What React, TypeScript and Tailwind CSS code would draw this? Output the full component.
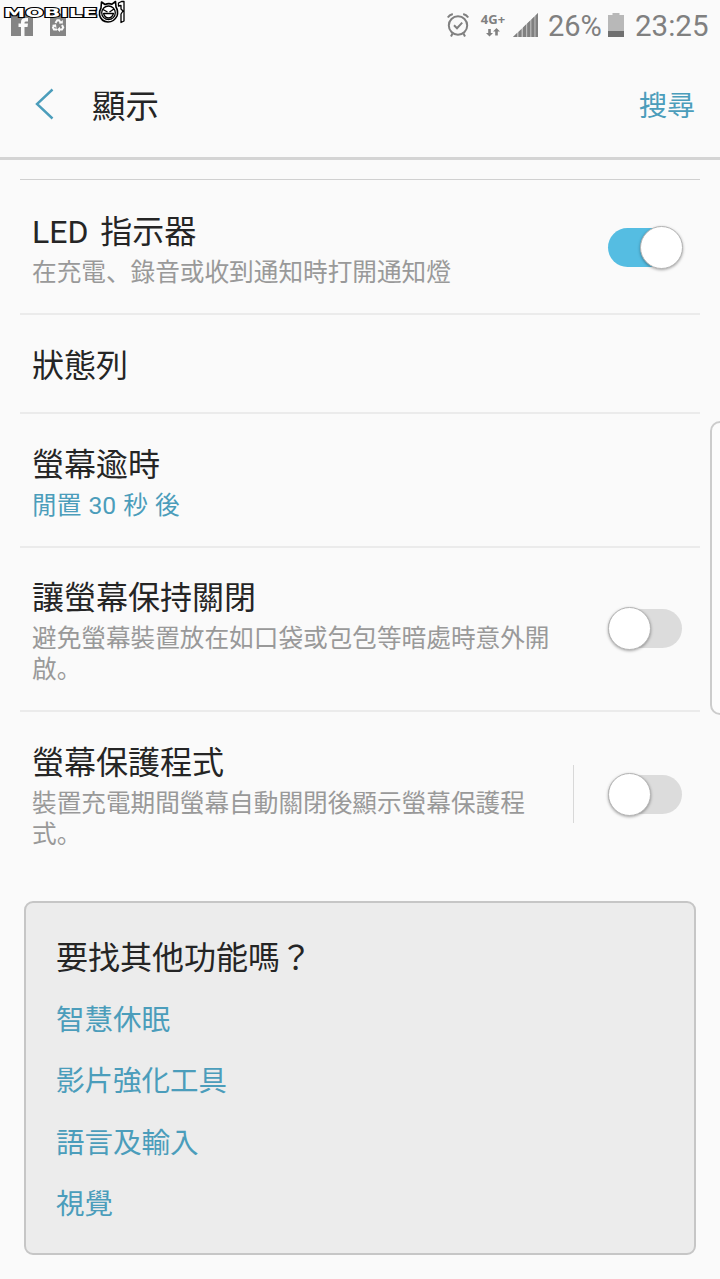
import React from "react";

const rows = [
  {
    title: "LED 指示器",
    lines: ["在充電、錄音或收到通知時打開通知燈"],
    box: "h-[135px] pt-[29px]",
    toggle: "on",
  },
  { title: "狀態列", lines: [], box: "h-[99px] pt-[28px]" },
  {
    title: "螢幕逾時",
    lines: ["閒置 30 秒 後"],
    box: "h-[134px] pt-[28px]",
    accent: true,
  },
  {
    title: "讓螢幕保持關閉",
    lines: ["避免螢幕裝置放在如口袋或包包等暗處時意外開", "啟。"],
    box: "h-[164px] pt-[27px]",
    toggle: "off",
  },
  {
    title: "螢幕保護程式",
    lines: ["裝置充電期間螢幕自動關閉後顯示螢幕保護程", "式。"],
    box: "h-[164px] pt-[28px]",
    toggle: "off",
    split: true,
  },
];

const links = ["智慧休眠", "影片強化工具", "語言及輸入", "視覺"];

function Logo() {
  return (
    <svg className="absolute left-0 top-0" width="130" height="30" viewBox="0 0 130 30">
      <text
        x="3.500"
        y="17"
        textLength="94"
        lengthAdjust="spacingAndGlyphs"
        fontFamily="'DejaVu Sans', sans-serif"
        fontWeight="700"
        fontSize="13"
        fill="#fff"
        stroke="#000"
        strokeWidth="1.800"
        paintOrder="stroke"
      >
        MOBILE
      </text>
      <g fill="#fff" stroke="#000" strokeWidth="1.6" strokeLinejoin="round">
        <path d="M101 8 L101.5 2 L105 4.5 Q108.500 3 112 4.200 L115.500 1.500 L116 7 Q118.500 11 117 16 Q114 22 108 22 Q101 21.500 99.500 15 Q99 11 101 8Z" />
        <circle cx="108.500" cy="12.800" r="6.800" strokeWidth="1.3" />
        <path d="M103 9.500 L107.500 12 M114 9 L109.500 12 M103.500 13.500 H113.500 Q112 18 108.500 18 Q105 18 103.500 13.500Z" strokeWidth="1.300" />
        <path d="M118.500 3 L121.500 1.500 H124 V21 L121 22.500 V14 L123 11 L121 9 V5.500 L118.500 6Z" strokeWidth="1.300" />
      </g>
    </svg>
  );
}

function StatusBar() {
  return (
    <div className="relative flex h-[50px] items-center justify-between pl-[11px] pr-[10px] text-[#808080]">
      <div className="flex gap-[16px]">
        <svg width="22" height="22" viewBox="0 0 22 22">
          <path fill="#858585" d="M0 0h22v22H0z" />
          <path fill="#fafafa" d="M10 22v-9H7.500V9.500H10V8q0-4 4.500-4H17v3.500h-2q-1.500 0-1.500 1.200v.8H17l-.5 3.500h-3v9z" />
        </svg>
        <svg width="18" height="22" viewBox="0 0 18 22">
          <path fill="#858585" d="M1 0h16v22H1z" />
          <g fill="none" stroke="#fafafa" strokeWidth="2">
            <path d="M6.500 9 L8.300 6.200 H10 L11.800 9" />
            <path d="M13 11 L14.200 13.500 L13 15.500 H10" />
            <path d="M8 15.500 H5 L4 13.500 L5.300 11.200" />
          </g>
          <path fill="#fafafa" d="M9.800 9.500h4V6zM11 12.800v5.200l-3-2.600zM2.800 11l4.200-.8.500 3.800z" />
        </svg>
      </div>
      <div className="flex items-center">
        <svg width="24" height="26" viewBox="0 0 24 26" fill="none" stroke="#808080" strokeWidth="2">
          <circle cx="12" cy="13.500" r="9.200" />
          <path d="M8 13.300l3 2.900 5.200-5.600" />
          <path d="M1.800 5.500q1.500-2.500 5-3.500M22.200 5.500q-1.500-2.500-5-3.500M6.500 21.500l-1.500 3M17.500 21.500l1.500 3" />
        </svg>
        <div className="ml-[10px] flex w-[26px] flex-col items-center">
          <span className="font-['Open_Sans'] text-[13px] font-bold leading-[13px]">4G+</span>
          <svg className="mt-[2px]" width="14" height="9" viewBox="0 0 14 9" fill="#808080">
            <path d="M2.200 1h2.600v4H7L3.500 8.500 0 5h2.200zM9.200 7.500h2.600v-4H14L10.500 0 7 3.500h2.200z" />
          </svg>
        </div>
        <svg className="ml-[7px]" width="26" height="26" viewBox="0 0 26 26" fill="#808080">
          <path d="M0 25L25 1v24z" fill="#bcbcbc" />
          <path d="M0 25l4-4v4zM5.500 20l3-3v8h-3zM10 15.500l3-3V25h-3zM14.200 11.500l3-3V25h-3zM18.400 7.500l3-3V25h-3zM22.500 3.500L25 1v24h-2.500z" />
        </svg>
        <span className="ml-[9px] w-[55px] whitespace-nowrap pt-[2px] font-[Roboto] text-[29px] leading-[32px]">26%</span>
        <svg className="ml-[5px]" width="16" height="25" viewBox="0 0 16 25">
          <path fill="#b8b8b8" d="M0 2h4.500V0h7v2H16v16H0z" />
          <path fill="#707070" d="M0 18h16v6H0z" />
        </svg>
        <span className="ml-[11px] w-[75px] whitespace-nowrap pt-[2px] font-[Roboto] text-[29.500px] leading-[32px]">23:25</span>
      </div>
      <Logo />
    </div>
  );
}

function Toggle({ on }: { on: boolean }) {
  return (
    <div className={`relative h-[39px] w-[74px] rounded-full ${on ? "bg-[#55bde2]" : "bg-[#dcdcdc]"}`}>
      <div
        className={`absolute -top-[2px] size-[43px] rounded-full border border-[#b5b5b5] bg-white shadow-[0_1px_3px_rgba(0,0,0,0.35)] ${on ? "-right-[1px]" : "left-0"}`}
      />
    </div>
  );
}

export default function App() {
  return (
    <div className="relative h-[1279px] w-[720px] overflow-hidden bg-[#fafafa] font-[Roboto,'Noto_Sans_CJK_JP',sans-serif] text-[#252525]">
      <StatusBar />
      <header className="flex h-[110px] items-center border-b-[3px] border-[#d4d4d4] pl-[34px] pr-[25px]">
        <svg width="20" height="32" viewBox="0 0 20 32" fill="none" stroke="#4b9dbb" strokeWidth="2.400">
          <path d="M18.500 1.500L3 16l15.500 14.500" />
        </svg>
        <h1 className="ml-[38px] flex-1 pt-[7px] text-[33.500px] leading-[44px]">顯示</h1>
        <span className="pt-[7px] text-[28px] text-[#4b9dbb]">搜尋</span>
      </header>

      <main className="px-5 pt-[19px]">
        <div className="h-px bg-[#d0d0d0]" />
        {rows.map((row, i) => (
          <section
            key={row.title}
            className={`relative flex justify-between pl-3 pr-[18px] ${row.box} ${i < rows.length - 1 ? "border-b-2 border-[#ebebeb]" : ""}`}
          >
            <div>
              <h2 className="text-[32px] leading-[46px] [word-spacing:4px]">{row.title}</h2>
              <div className={`mt-[2px] text-[24.650px] leading-[31px] [word-spacing:1px] ${row.accent ? "text-[#4b9dbb]" : "text-[#999999]"}`}>
                {row.lines.map((line) => (
                  <p key={line} className="whitespace-nowrap">{line}</p>
                ))}
              </div>
            </div>
            {row.toggle && (
              <div className="flex items-center pb-[28px]">
                {row.split && <div className="mr-[34px] h-[58px] w-px bg-[#d8d8d8]" />}
                <Toggle on={row.toggle === "on"} />
              </div>
            )}
          </section>
        ))}
      </main>

      <div className="mx-6 mt-[25px] h-[354px] rounded-[9px] border-2 border-[#c6c6c6] bg-[#ececec] px-[30px] pt-[31px]">
        <h2 className="text-[32px] leading-[48px]">要找其他功能嗎？</h2>
        <ul className="mt-[8px] text-[28.500px] leading-[61.300px] text-[#4b9dbb]">
          {links.map((link) => (
            <li key={link}>{link}</li>
          ))}
        </ul>
      </div>

      {/* edge panel handle */}
      <div className="absolute -right-[10px] top-[421px] h-[294px] w-[20px] rounded-l-[10px] border-2 border-[#cccccc] bg-[#fcfcfc]" />
    </div>
  );
}
